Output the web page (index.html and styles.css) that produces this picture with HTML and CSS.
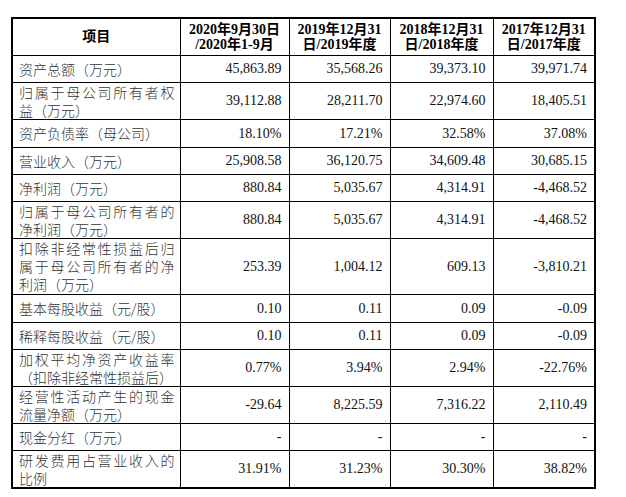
FILE: index.html
```html
<!DOCTYPE html>
<html lang="zh-CN">
<head>
<meta charset="utf-8">
<title>主要财务数据</title>
<link rel="stylesheet" href="styles.css">
</head>
<body>
<div class="frame">
<table class="fin">
  <colgroup>
    <col class="c1"><col class="c2"><col class="c3"><col class="c4"><col class="c5">
  </colgroup>
  <tr class="hd">
    <th class="item">项目</th>
    <th>2020年9月30日<br>/2020年1-9月</th>
    <th>2019年12月31<br>日/2019年度</th>
    <th>2018年12月31<br>日/2018年度</th>
    <th>2017年12月31<br>日/2017年度</th>
  </tr>
  <tr class="h27"><td class="lb"><span class="ln">资产总额（万元）</span></td><td>45,863.89</td><td>35,568.26</td><td>39,373.10</td><td>39,971.74</td></tr>
  <tr class="h36"><td class="lb"><span class="ln full">归属于母公司所有者权</span><span class="ln">益（万元）</span></td><td>39,112.88</td><td>28,211.70</td><td>22,974.60</td><td>18,405.51</td></tr>
  <tr class="h28"><td class="lb"><span class="ln">资产负债率（母公司）</span></td><td>18.10%</td><td>17.21%</td><td>32.58%</td><td>37.08%</td></tr>
  <tr class="h27"><td class="lb"><span class="ln">营业收入（万元）</span></td><td>25,908.58</td><td>36,120.75</td><td>34,609.48</td><td>30,685.15</td></tr>
  <tr class="h27"><td class="lb"><span class="ln">净利润（万元）</span></td><td>880.84</td><td>5,035.67</td><td>4,314.91</td><td>-4,468.52</td></tr>
  <tr class="h36"><td class="lb"><span class="ln full">归属于母公司所有者的</span><span class="ln">净利润（万元）</span></td><td>880.84</td><td>5,035.67</td><td>4,314.91</td><td>-4,468.52</td></tr>
  <tr class="h56"><td class="lb"><span class="ln full">扣除非经常性损益后归</span><span class="ln full">属于母公司所有者的净</span><span class="ln">利润（万元）</span></td><td>253.39</td><td>1,004.12</td><td>609.13</td><td>-3,810.21</td></tr>
  <tr class="h28"><td class="lb"><span class="ln">基本每股收益（元/股）</span></td><td>0.10</td><td>0.11</td><td>0.09</td><td>-0.09</td></tr>
  <tr class="h27"><td class="lb"><span class="ln">稀释每股收益（元/股）</span></td><td>0.10</td><td>0.11</td><td>0.09</td><td>-0.09</td></tr>
  <tr class="h37"><td class="lb"><span class="ln full">加权平均净资产收益率</span><span class="ln">（扣除非经常性损益后）</span></td><td>0.77%</td><td>3.94%</td><td>2.94%</td><td>-22.76%</td></tr>
  <tr class="h37"><td class="lb"><span class="ln full">经营性活动产生的现金</span><span class="ln">流量净额（万元）</span></td><td>-29.64</td><td>8,225.59</td><td>7,316.22</td><td>2,110.49</td></tr>
  <tr class="h27"><td class="lb"><span class="ln">现金分红（万元）</span></td><td>-</td><td>-</td><td>-</td><td>-</td></tr>
  <tr class="h37"><td class="lb"><span class="ln full">研发费用占营业收入的</span><span class="ln">比例</span></td><td>31.91%</td><td>31.23%</td><td>30.30%</td><td>38.82%</td></tr>
</table>
</div>
</body>
</html>
```

FILE: styles.css
```css
html, body {
  margin: 0;
  padding: 0;
  background: #fff;
}
body {
  padding: 17px 0 0 11px;
  font-family: "Liberation Serif", "Noto Sans CJK SC", serif;
  color: #111;
}
.frame {
  width: 581px;
  border: 2px solid #000;
}
.fin {
  width: 581px;
  border-collapse: collapse;
  table-layout: fixed;
}
.c1 { width: 167px; }
.c2 { width: 109px; }
.c3 { width: 101px; }
.c4 { width: 103px; }
.c5 { width: 101px; }
.fin th,
.fin td {
  border: 1px solid #000;
  padding: 0 7px 0 7px;
  vertical-align: middle;
  font-size: 14px;
  line-height: 17px;
}
.fin tr:first-child th { border-top: 0; }
.fin tr:last-child td { border-bottom: 0; }
.fin th:first-child, .fin td:first-child { border-left: 0; }
.fin th:last-child, .fin td:last-child { border-right: 0; }
.fin th {
  font-weight: bold;
  text-align: center;
  line-height: 15px;
  padding: 0 2px;
  color: #000;
}
.fin td {
  text-align: right;
  white-space: nowrap;
}
.fin td.lb {
  text-align: left;
  padding: 0 5px 0 6px;
  font-family: "Noto Sans CJK SC", sans-serif;
  font-weight: 300;
  color: #333;
  line-height: 18px;
}
.ln {
  display: block;
  white-space: nowrap;
}
.ln.full {
  text-align: justify;
  text-align-last: justify;
}
.hd { height: 36px; }
.h27 { height: 27px; }
.h28 { height: 28px; }
.h36 { height: 36px; }
.h37 { height: 37px; }
.h56 { height: 56px; }
```
